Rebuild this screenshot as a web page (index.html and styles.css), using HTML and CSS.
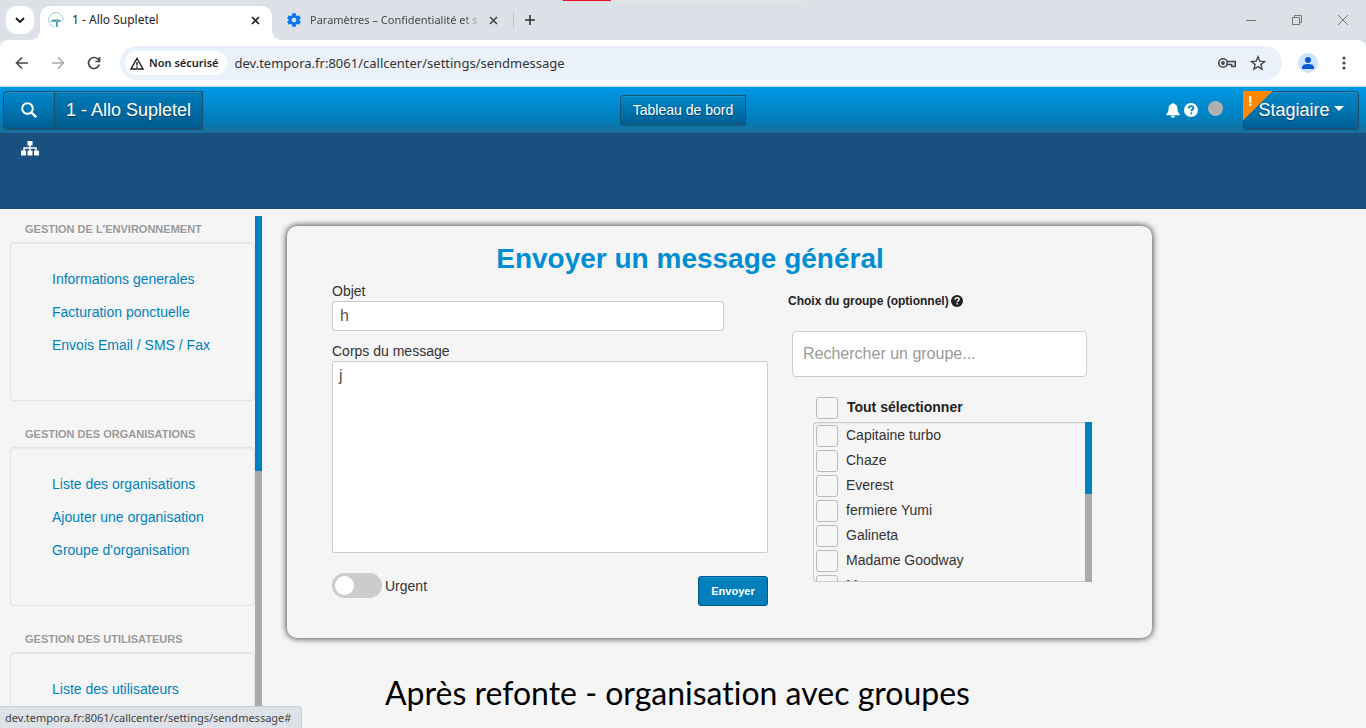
FILE: index.html
```html
<!DOCTYPE html>
<html lang="fr">
<head>
<meta charset="utf-8">
<title>1 - Allo Supletel</title>
<link rel="stylesheet" href="styles.css">
</head>
<body>
<header class="browser">
  <div class="loadbar"></div>
  <div class="tabstrip">
    <button class="tab-search" aria-label="Rechercher dans les onglets"><svg width="10" height="6" viewBox="0 0 10 6"><path d="M1 1l4 4 4-4" fill="none" stroke="#1f1f1f" stroke-width="2"/></svg></button>
    <div class="tab tab-active">
      <svg width="16" height="16" viewBox="0 0 16 16"><path d="M1.500 11A7.200 7.200 0 1 1 15 9" fill="none" stroke="#9ccbd3" stroke-width="1"/><path d="M2 11.500A7.200 7.200 0 0 0 6 15" fill="none" stroke="#9ccbd3" stroke-width="1"/><path d="M2.500 9.800C3.500 8 5 7.300 8 7.300s4.500.7 5.500 2.500H9.700V15H7.900V9.800z" fill="#3b9dae"/><circle cx="8.800" cy="8.300" r="1" fill="#e9a08c"/></svg>
      <span class="tab-title">1 - Allo Supletel</span>
      <button class="tab-close" aria-label="Fermer l'onglet"><svg width="9" height="9" viewBox="0 0 9 9"><path d="M1 1l7 7M8 1L1 8" stroke="#1f1f1f" stroke-width="1.600"/></svg></button>
    </div>
    <div class="tab">
      <svg width="16" height="16" viewBox="0 0 24 24"><path fill="#0b76ef" fill-rule="evenodd" d="M9.500 2h5l.6 3 1.900 1.100 2.900-1 2.500 4.300-2.300 2v1.200l2.300 2-2.500 4.300-2.900-1L15.100 19l-.6 3h-5l-.6-3L7 17.900l-2.900 1-2.500-4.300 2.300-2v-1.200l-2.300-2 2.500-4.300 2.900 1L8.900 5zM12 8.500a3.500 3.500 0 100 7 3.500 3.500 0 000-7z"/></svg>
      <span class="tab-title tab-fade">Paramètres – Confidentialité et s</span>
      <button class="tab-close" aria-label="Fermer l'onglet"><svg width="9" height="9" viewBox="0 0 9 9"><path d="M1 1l7 7M8 1L1 8" stroke="#474747" stroke-width="1.600"/></svg></button>
    </div>
    <span class="tab-sep"></span>
    <button class="new-tab" aria-label="Nouvel onglet"><svg width="12" height="12" viewBox="0 0 12 12"><path d="M6 1v10M1 6h10" stroke="#333" stroke-width="1.600"/></svg></button>
    <div class="window-controls">
      <button aria-label="Réduire"><svg width="12" height="12" viewBox="0 0 12 12"><path d="M1 6.500h10" stroke="#777"/></svg></button>
      <button aria-label="Restaurer"><svg width="12" height="12" viewBox="0 0 12 12"><path d="M1.500 3.500h7v7h-7zM3.500 3.500v-2h7v7h-2" fill="none" stroke="#777"/></svg></button>
      <button aria-label="Fermer"><svg width="12" height="12" viewBox="0 0 12 12"><path d="M1 1l10 10M11 1L1 11" stroke="#777"/></svg></button>
    </div>
  </div>
  <div class="toolbar">
    <button aria-label="Précédent"><svg width="14" height="14" viewBox="0 0 14 14"><path d="M13 7H1.500M7 1.500L1.500 7 7 12.500" fill="none" stroke="#474747" stroke-width="1.600"/></svg></button>
    <button aria-label="Suivant"><svg width="14" height="14" viewBox="0 0 14 14"><path d="M1 7h11.500M7 1.500L12.500 7 7 12.500" fill="none" stroke="#a9a9a9" stroke-width="1.600"/></svg></button>
    <button aria-label="Actualiser"><svg width="14" height="14" viewBox="0 0 14 14"><path d="M12.300 8.500A5.500 5.500 0 1 1 11 3.200L12.500 4.800" fill="none" stroke="#474747" stroke-width="1.700"/><path d="M12.500 1v4.500H8.300" fill="none" stroke="#474747" stroke-width="1.700"/></svg></button>
    <div class="omnibox">
      <button class="chip"><svg width="14" height="13" viewBox="0 0 14 13"><path d="M7 1.500L13 12H1z" fill="none" stroke="#1f1f1f" stroke-width="1.400"/><path d="M7 5v3.500M7 9.300v1.400" stroke="#1f1f1f" stroke-width="1.400"/></svg>Non sécurisé</button>
      <input class="address" type="text" aria-label="Adresse" value="dev.tempora.fr:8061/callcenter/settings/sendmessage">
      <button aria-label="Mots de passe"><svg width="18" height="12" viewBox="0 0 18 12"><circle cx="5" cy="6" r="4.200" fill="none" stroke="#474747" stroke-width="1.600"/><circle cx="5" cy="6" r="1.900" fill="#474747"/><path d="M9 4.500h8.200v5h-3.500v-2H9" fill="none" stroke="#474747" stroke-width="1.600"/></svg></button>
      <button aria-label="Favoris"><svg width="16" height="16" viewBox="0 0 16 16"><path d="M8 1.700l1.800 4.500 4.800.3-3.700 3.100 1.200 4.700L8 11.700l-4.100 2.600 1.200-4.700L1.400 6.500l4.800-.3z" fill="none" stroke="#474747" stroke-width="1.400"/></svg></button>
    </div>
    <button class="profile" aria-label="Profil"><svg width="20" height="20" viewBox="0 0 20 20"><circle cx="10" cy="10" r="10" fill="#cfe2fc"/><circle cx="10" cy="7" r="3" fill="#0b57d0"/><path d="M4 16v-1.500c0-2.500 3-3.500 6-3.500s6 1 6 3.500V16z" fill="#0b57d0"/></svg></button>
    <button class="kebab" aria-label="Menu"><svg width="4" height="14" viewBox="0 0 4 14" fill="#474747"><circle cx="2" cy="2" r="1.600"/><circle cx="2" cy="7" r="1.600"/><circle cx="2" cy="12" r="1.600"/></svg></button>
  </div>
</header>

<nav class="navbar">
  <div class="nav-left">
    <button class="nav-btn nav-search" aria-label="Rechercher"><svg width="16" height="16" viewBox="0 0 16 16"><circle cx="6.500" cy="6.500" r="5.300" fill="none" stroke="#fff" stroke-width="2"/><path d="M10.500 10.500l4.700 4.700" stroke="#fff" stroke-width="2.400"/></svg></button>
    <a class="nav-btn nav-brand" href="#">1 - Allo Supletel</a>
  </div>
  <a class="nav-btn nav-dashboard" href="#">Tableau de bord</a>
  <div class="nav-right">
    <svg width="14" height="15" viewBox="0 0 14 15"><path fill="#fff" d="M7 0c.7 0 1 .4 1 1 2.400.5 3.500 2.300 3.500 4.500 0 3.300 1 4.600 2.200 5.700v1H.3v-1C1.500 10.100 2.500 8.800 2.500 5.500 2.500 3.300 3.600 1.500 6 1c0-.6.3-1 1-1zM5 12.800h4a2 2 0 01-4 0z"/></svg>
    <svg width="14" height="14" viewBox="0 0 14 14"><circle cx="7" cy="7" r="7" fill="#fff"/><path d="M4.700 5.400C4.800 3.900 5.700 3.200 7 3.200c1.400 0 2.400.8 2.400 2 0 1.600-2.200 1.500-2.200 3" fill="none" stroke="#0083c2" stroke-width="1.800"/><path d="M6.300 9.400h1.800v1.700H6.300z" fill="#0083c2"/></svg>
    <span class="presence"></span>
    <button class="nav-btn nav-user">Stagiaire<span class="caret"></span><span class="alert-corner">!</span></button>
  </div>
</nav>
<div class="subnav">
  <a href="#" aria-label="Organisation"><svg width="18" height="15" viewBox="0 0 18 15"><path fill="#fff" d="M6.500 0h5v4.500H9.700V6.300h6V9.500H17.500c.3 0 .5.200.5.500v4c0 .3-.2.500-.5.500h-4c-.3 0-.5-.2-.5-.5v-4c0-.3.200-.5.500-.5h.8V7.700H9.700v1.800h1.300c.3 0 .5.200.5.500v4c0 .3-.2.500-.5.500H7c-.3 0-.5-.2-.5-.5v-4c0-.3.200-.5.500-.5h1.300V7.700H3.700v1.800h.8c.3 0 .5.200.5.500v4c0 .3-.2.500-.5.500h-4c-.3 0-.5-.2-.5-.5v-4c0-.3.200-.5.500-.5h1.800V6.300h6V4.500H6.500z"/></svg></a>
</div>

<div class="page">
  <aside class="sidebar">
    <div class="menus">
      <h2>Gestion de l'environnement</h2>
      <ul>
        <li><a href="#">Informations generales</a></li>
        <li><a href="#">Facturation ponctuelle</a></li>
        <li><a href="#">Envois Email / SMS / Fax</a></li>
      </ul>
      <h2>Gestion des organisations</h2>
      <ul>
        <li><a href="#">Liste des organisations</a></li>
        <li><a href="#">Ajouter une organisation</a></li>
        <li><a href="#">Groupe d'organisation</a></li>
      </ul>
      <h2>Gestion des utilisateurs</h2>
      <ul>
        <li><a href="#">Liste des utilisateurs</a></li>
      </ul>
    </div>
    <div class="scrollbar"><div class="thumb"></div></div>
  </aside>
  <main class="content">
    <form class="panel">
      <h1>Envoyer un message général</h1>
      <div class="columns">
        <div class="message">
          <label for="objet">Objet</label>
          <input class="subject" id="objet" type="text" value="h">
          <label for="corps">Corps du message</label>
          <textarea id="corps">j</textarea>
          <div class="actions">
            <label class="urgent"><input class="switch" type="checkbox">Urgent</label>
            <button class="send" type="submit">Envoyer</button>
          </div>
        </div>
        <div class="groups">
          <label class="groups-label" for="recherche">Choix du groupe (optionnel)
            <svg width="12" height="12" viewBox="0 0 14 14"><circle cx="7" cy="7" r="7" fill="#222"/><path d="M4.700 5.400C4.800 3.900 5.700 3.200 7 3.200c1.400 0 2.400.8 2.400 2 0 1.600-2.200 1.500-2.200 3" fill="none" stroke="#f5f5f5" stroke-width="1.800"/><path d="M6.300 9.400h1.800v1.700H6.300z" fill="#f5f5f5"/></svg></label>
          <input class="group-search" id="recherche" type="search" placeholder="Rechercher un groupe...">
          <label class="check all"><input type="checkbox">Tout sélectionner</label>
          <div class="list">
            <div class="items">
              <label class="check"><input type="checkbox">Capitaine turbo</label>
              <label class="check"><input type="checkbox">Chaze</label>
              <label class="check"><input type="checkbox">Everest</label>
              <label class="check"><input type="checkbox">fermiere Yumi</label>
              <label class="check"><input type="checkbox">Galineta</label>
              <label class="check"><input type="checkbox">Madame Goodway</label>
              <label class="check"><input type="checkbox">Maurane</label>
            </div>
            <div class="scrollbar"><div class="thumb"></div></div>
          </div>
        </div>
      </div>
    </form>
    <p class="caption">Après refonte - organisation avec groupes</p>
  </main>
</div>
<div class="status">dev.tempora.fr:8061/callcenter/settings/sendmessage#</div>
</body>
</html>
```
FILE: styles.css
```css
* { box-sizing: border-box; }
body {
  margin: 0;
  height: 100vh;
  display: flex;
  flex-direction: column;
  overflow: hidden;
  position: relative;
  background: #f5f5f5;
  color: #333;
  font: 14px/20px "Liberation Sans", Arial, sans-serif;
}
button { font: inherit; border: 0; background: none; padding: 0; }
a { text-decoration: none; color: #0081bd; }
h1, h2, ul, p { margin: 0; padding: 0; }
svg { display: block; flex: none; }

/* Browser frame */
.browser {
  flex: none;
  background: #dbe1e7;
  font-family: "Noto Sans", "Open Sans", sans-serif;
  color: #1f1f1f;
}
.loadbar {
  position: absolute;
  top: 0;
  left: 563px;
  width: 241px;
  height: 1px;
  background: linear-gradient(90deg, #e81123 20%, #e6e6e6 20%);
}
.tabstrip { display: flex; align-items: center; height: 40px; padding-left: 6px; }
.tab-search {
  width: 28px;
  height: 28px;
  margin-right: 6px;
  border-radius: 10px;
  background: #fff;
  display: grid;
  place-items: center;
}
.tab {
  display: flex;
  align-items: center;
  gap: 8px;
  width: 232px;
  height: 34px;
  margin-top: 6px;
  padding: 0 12px 6px 8px;
  font-size: 12px;
  color: #474747;
}
.tab + .tab { width: 240px; padding: 0 14px 6px 14px; font-size: 11px; }
.tab-active { position: relative; background: #fff; border-radius: 10px 10px 0 0; color: #1f1f1f; }
.tab-active::before, .tab-active::after {
  content: "";
  position: absolute;
  bottom: 0;
  width: 10px;
  height: 10px;
}
.tab-active::before { right: 100%; background: radial-gradient(circle at 0 0, #dbe1e7 10px, #fff 10px); }
.tab-active::after { left: 100%; background: radial-gradient(circle at 100% 0, #dbe1e7 10px, #fff 10px); }
.tab-title { flex: 1; min-width: 0; overflow: hidden; white-space: nowrap; }
.tab-fade {
  -webkit-mask-image: linear-gradient(90deg, #000 90%, transparent);
  mask-image: linear-gradient(90deg, #000 90%, transparent);
}
.tab-sep { width: 1px; height: 16px; background: #b9bec4; margin: 0 10px 0 1px; }
.window-controls { margin-left: auto; display: flex; gap: 34px; padding-right: 17px; }
.toolbar {
  display: flex;
  align-items: center;
  height: 47px;
  padding: 0 20px 0 15px;
  background: #fff;
  border-bottom: 1px solid #d5d9dd;
  border-radius: 8px 8px 0 0;
  gap: 22px;
}
.profile { margin-right: 2px; }
.omnibox {
  flex: 1;
  display: flex;
  align-items: center;
  gap: 14px;
  height: 34px;
  margin-left: -3px;
  margin-right: -6px;
  padding: 0 16px 0 5px;
  border-radius: 17px;
  background: #eaf1fa;
}
.chip {
  display: flex;
  align-items: center;
  gap: 5px;
  height: 24px;
  padding: 0 8px 0 5px;
  margin-right: -6px;
  border-radius: 12px;
  background: #fff;
  color: #1f1f1f;
  font-size: 11px;
  font-weight: 600;
}
.address { flex: 1; border: 0; padding: 0; background: none; color: #333; font: inherit; font-size: 13px; }
.status {
  position: absolute;
  left: 0;
  bottom: 0;
  padding: 1px 10px 0 5px;
  border: 1px solid #cbcfd4;
  border-width: 1px 1px 0 0;
  border-radius: 0 4px 0 0;
  background: #dde2e8;
  color: #444;
  font: 11px/20px "Noto Sans", "Open Sans", sans-serif;
}

/* Application header */
.navbar {
  flex: none;
  display: grid;
  grid-template-columns: 1fr auto 1fr;
  align-items: center;
  height: 46px;
  padding: 0 7px;
  background: linear-gradient(#0098e6, #007fbb 70%, #1b6d9c);
}
.nav-btn {
  display: flex;
  align-items: center;
  justify-content: center;
  border: 1px solid #1f4f6e;
  background: linear-gradient(#0088cb, #005f94);
  box-shadow: inset 0 1px 0 rgba(255, 255, 255, .1), 0 1px 1px rgba(0, 0, 0, .2);
  color: #fff;
  text-shadow: 0 1px 1px rgba(0, 0, 0, .4);
}
.nav-left, .nav-right { display: flex; align-items: center; }
.nav-left { margin-left: -4px; }
.nav-search { width: 52px; height: 38px; border-radius: 4px 0 0 4px; }
.nav-brand { height: 38px; margin-left: -1px; padding: 0 11px; font-size: 18px; background: linear-gradient(#007cba, #005b8e); }
.nav-dashboard { height: 30px; padding: 0 12px; border-radius: 3px 0 0 3px; }
.nav-right { justify-content: flex-end; gap: 4px; }
.presence { width: 15px; height: 15px; margin: 0 16px 4px 6px; border-radius: 50%; background: #b0b0b0; }
.nav-user { position: relative; width: 116px; height: 38px; gap: 4px; border-radius: 3px; font-size: 18px; }
.caret { border: 5px solid transparent; border-top-color: #fff; border-bottom: 0; margin-bottom: 4px; }
.alert-corner {
  position: absolute;
  left: -1px;
  top: -1px;
  width: 30px;
  height: 30px;
  padding-left: 5px;
  background: linear-gradient(135deg, #ff8800 50%, transparent 50%);
  font-size: 14px;
  line-height: 20px;
  font-weight: bold;
  text-align: left;
  text-shadow: none;
}
.subnav { flex: none; height: 76px; padding: 8px 21px; background: #1a5080; }
.subnav a { display: inline-block; }

/* Page */
.page { flex: 1; min-height: 0; display: flex; }
.sidebar { flex: none; display: flex; width: 262px; margin-top: 7px; overflow: hidden; }
.menus { flex: 1; padding-left: 10px; }
.menus h2 {
  height: 26px;
  padding-left: 15px;
  color: #999;
  font-size: 11px;
  line-height: 26px;
  text-transform: uppercase;
  text-shadow: 0 1px 0 #fff;
}
.menus ul {
  height: 159px;
  margin-bottom: 20px;
  padding: 20px 0 0 41px;
  border: 1px solid #e3e3e3;
  border-radius: 4px;
  box-shadow: inset 0 1px 1px rgba(0, 0, 0, .05);
  list-style: none;
  line-height: 33px;
}
.scrollbar { flex: none; width: 7px; background: #aaa; }
.thumb { height: 255px; background: #0082c0; }
.content { flex: 1; padding: 17px 214px 0 25px; }
.panel {
  padding: 17px 60px 32px 45px;
  border-radius: 10px;
  box-shadow: 0 0 7px #222;
  background: #f5f5f5;
}
h1 {
  padding-right: 44px;
  color: #008dd2;
  font-size: 28px;
  line-height: 32px;
  text-align: center;
}
.columns { display: grid; grid-template-columns: 436fr 304fr; gap: 20px; padding-top: 7px; }
.message { display: flex; flex-direction: column; }
.message > label { line-height: 19px; }
.subject, textarea {
  border: 1px solid #ccc;
  border-radius: 2px;
  background: #fff;
  color: #555;
  font: 16px/20px "Liberation Sans", Arial, sans-serif;
}
.subject { width: 90%; height: 30px; margin-bottom: 11px; padding: 0 7px; }
textarea { height: 192px; padding: 4px 6px; resize: none; }
.actions { display: flex; justify-content: space-between; padding-top: 20px; }
.urgent { display: flex; align-items: center; gap: 3px; height: 25px; }
.switch {
  appearance: none;
  width: 50px;
  height: 25px;
  margin: 0;
  padding: 3px;
  border-radius: 13px;
  background: #ccc;
}
.switch::before { content: ""; display: block; width: 19px; height: 19px; border-radius: 50%; background: #fff; }
.send {
  width: 70px;
  height: 30px;
  margin-top: 3px;
  border: 1px solid #005580;
  border-radius: 3px;
  background: #007fba;
  box-shadow: inset 0 1px 0 #0098df;
  color: #fff;
  font-size: 11px;
  font-weight: bold;
}
.groups { display: flex; flex-direction: column; padding-top: 9px; }
.groups-label { display: flex; align-items: center; gap: 2px; color: #222; font-size: 12px; font-weight: bold; }
.group-search {
  height: 46px;
  margin: 20px 5px 18px 4px;
  padding: 0 10px;
  border: 1px solid #ccc;
  border-radius: 4px;
  background: #fff;
  font: 16px/20px "Liberation Sans", Arial, sans-serif;
}
.group-search::placeholder { color: #999; }
.check { display: flex; align-items: flex-start; gap: 8px; height: 25px; padding-left: 2px; line-height: 24px; }
.check input {
  appearance: none;
  width: 22px;
  height: 22px;
  margin: 2px 0 0;
  border: 1px solid #bbb;
  border-radius: 3px;
  background: #f6f6f6;
}
.all { margin: 0 0 2px 26px; gap: 9px; font-weight: bold; color: #222; }
.list { display: flex; height: 160px; margin-left: 25px; overflow: hidden; }
.items {
  flex: 1;
  overflow: hidden;
  border: 1px solid #ccc;
  border-right: 0;
  border-radius: 4px 0 0 4px;
  box-shadow: inset 0 1px 1px rgba(0, 0, 0, .05);
}
.list .thumb { height: 72px; }
.caption {
  padding: 36px 0 0 98px;
  color: #000;
  font: 32px/38px Lato, "Open Sans", sans-serif;
  font-variant-ligatures: none;
  white-space: nowrap;
}
```
